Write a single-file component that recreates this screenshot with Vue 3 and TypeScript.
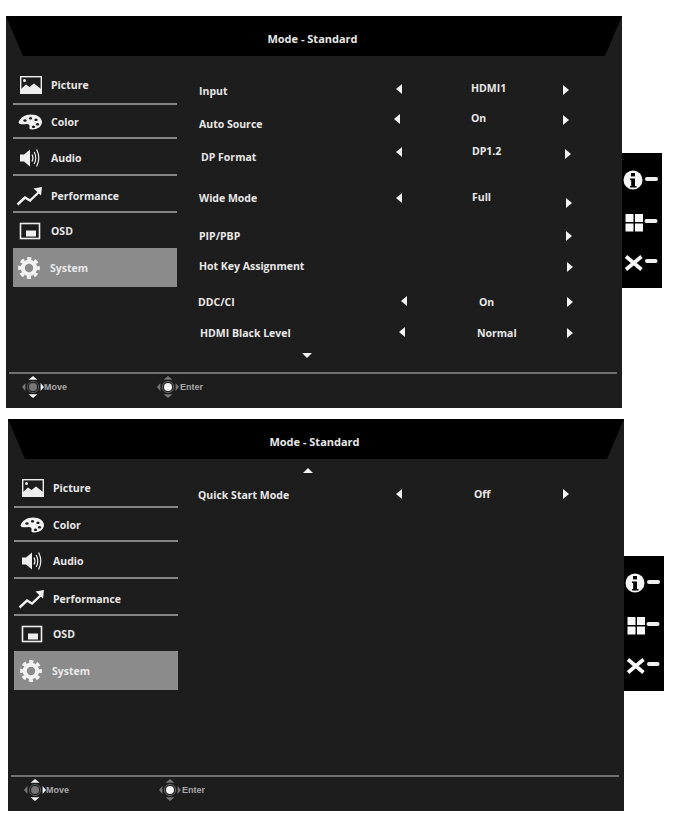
<script setup lang="ts">
type Offset = [number, number];

interface Row {
  label: string;
  value?: string;
  h: number;
  labelAt?: Offset;
  valueAt?: Offset;
  leftAt?: Offset;
  rightAt?: Offset;
}

interface Screen {
  rows: Row[];
  up: boolean;
  down: boolean;
}

const menu: { name: string; icon: string; h: number; at?: Offset }[] = [
  { name: "Picture", icon: "picture", h: 38 },
  { name: "Color", icon: "color", h: 34, at: [0, 1] },
  { name: "Audio", icon: "audio", h: 37, at: [0, 1] },
  { name: "Performance", icon: "performance", h: 37, at: [0, 2] },
  { name: "OSD", icon: "osd", h: 35 },
  { name: "System", icon: "system", h: 39, at: [-1, 0] },
];

const screens: Screen[] = [
  {
    up: false,
    down: true,
    rows: [
      { label: "Input", value: "HDMI1", h: 33, valueAt: [0, -3], leftAt: [0, -2], rightAt: [0, -1] },
      { label: "Auto Source", value: "On", h: 34, valueAt: [0, -6], leftAt: [-2, -5], rightAt: [0, -4] },
      { label: "DP Format", value: "DP1.2", h: 32, labelAt: [2, 0], valueAt: [1, -6], leftAt: [0, -5], rightAt: [2, -3] },
      { label: "Wide Mode", value: "Full", h: 50, valueAt: [1, -1], leftAt: [0, 0], rightAt: [3, 5] },
      { label: "PIP/PBP", h: 26, rightAt: [3, 0] },
      { label: "Hot Key Assignment", h: 34, rightAt: [4, 1] },
      { label: "DDC/CI", value: "On", h: 38, labelAt: [-1, 0], valueAt: [8, 0], leftAt: [5, -1], rightAt: [4, 0] },
      { label: "HDMI Black Level", value: "Normal", h: 24, labelAt: [1, 0], valueAt: [6, 0], leftAt: [3, -1], rightAt: [4, 0] },
    ],
  },
  {
    up: true,
    down: false,
    rows: [
      { label: "Quick Start Mode", value: "Off", h: 38, labelAt: [-2, -1], valueAt: [2, -2], leftAt: [-1, -2], rightAt: [-1, -2] },
    ],
  },
];

function shift(at?: Offset) {
  if (!at) return undefined;
  return { transform: `translate(${at[0]}px, ${at[1]}px)` };
}
</script>

<template>
  <div class="page">
    <section v-for="(screen, s) in screens" :key="s" class="screen">
      <div class="panel">
        <header class="title">Mode - Standard</header>

        <div class="body">
          <ul class="menu">
            <li
              v-for="item in menu"
              :key="item.name"
              class="menu-item"
              :class="{ active: item.name === 'System' }"
              :style="{ height: item.h + 'px' }"
            >
              <div class="menu-inner" :style="shift(item.at)">
                <svg class="menu-icon" viewBox="0 0 30 24" width="30" height="24" aria-hidden="true">
                  <g v-if="item.icon === 'picture'">
                    <rect x="5.7" y="3.7" width="20.6" height="16.6" fill="none" stroke="#eee" stroke-width="1.4" />
                    <circle cx="9.5" cy="7.5" r="1.5" fill="#eee" />
                    <path d="M6 20 L6 16 L11 11.5 L14.5 14 L19 10.5 L26 16 L26 20 Z" fill="#eee" />
                  </g>
                  <g v-else-if="item.icon === 'color'">
                    <path
                      fill="#f2f2f2"
                      fill-rule="evenodd"
                      d="M3.5 12.5 C5 7.5 10 4.5 16 4.5 C22.5 4.5 27 8 27 12 C27 16.5 22.5 19.5 17 19.5 C14.5 19.5 14 18.5 14.5 17 C15 15 13.5 13.8 11.5 14 C8.5 14.3 4.5 15 3.5 12.5 Z M10 9.2 a1.7 1.3 0 1 0 0.01 0 Z M15.5 7 a1.7 1.3 0 1 0 0.01 0 Z M21 8.5 a1.7 1.3 0 1 0 0.01 0 Z M22.5 13 a1.7 1.3 0 1 0 0.01 0 Z M18.5 15.5 a1.7 1.3 0 1 0 0.01 0 Z"
                    />
                  </g>
                  <g v-else-if="item.icon === 'audio'">
                    <path d="M5 8.5 H9 L15 3.5 V20.5 L9 15.5 H5 Z" fill="#eee" />
                    <path d="M17 8.5 Q19 12 17 15.5 M19.2 6 Q22.4 12 19.2 18 M21.6 3.5 Q26 12 21.6 20.5" fill="none" stroke="#eee" stroke-width="1.2" />
                  </g>
                  <g v-else-if="item.icon === 'performance'">
                    <path d="M2.5 20.5 L10 13.5 L15 16.5 L23.5 8.5" fill="none" stroke="#f2f2f2" stroke-width="2.4" />
                    <path d="M18.5 4.5 L27 3 L26 11.5 Z" fill="#f2f2f2" />
                  </g>
                  <g v-else-if="item.icon === 'osd'">
                    <rect x="5.5" y="4.5" width="19" height="15" fill="none" stroke="#eee" stroke-width="1.6" />
                    <rect x="11" y="11.5" width="10" height="6" fill="#eee" />
                  </g>
                  <g v-else>
                    <circle cx="15" cy="12" r="6.2" fill="none" stroke="#f2f2f2" stroke-width="4" />
                    <circle cx="15" cy="12" r="9.4" fill="none" stroke="#f2f2f2" stroke-width="3" stroke-dasharray="4.2 3.18" stroke-dashoffset="2.1" />
                  </g>
                </svg>
                <span>{{ item.name }}</span>
              </div>
            </li>
          </ul>

          <div class="options">
            <div class="nav nav-top">
              <span v-if="screen.up" class="tri-up"></span>
            </div>
            <div v-for="row in screen.rows" :key="row.label" class="row" :style="{ height: row.h + 'px' }">
              <span class="label" :style="shift(row.labelAt)">{{ row.label }}</span>
              <span class="cell">
                <i v-if="row.leftAt" class="tri-left" :style="shift(row.leftAt)"></i>
              </span>
              <span class="value" :style="shift(row.valueAt)">{{ row.value }}</span>
              <span class="cell">
                <i v-if="row.rightAt" class="tri-right" :style="shift(row.rightAt)"></i>
              </span>
            </div>
            <div v-if="screen.down" class="nav">
              <span class="tri-down"></span>
            </div>
          </div>
        </div>

        <footer class="foot">
          <div class="hint hint-move">
            <svg viewBox="0 0 22 22" width="22" height="22" aria-hidden="true">
              <circle cx="11" cy="11" r="5.6" fill="none" stroke="#555" stroke-width="1" />
              <circle cx="11" cy="11" r="4" fill="#777" />
              <path d="M6.5 3.8 H15.5 L11 0 Z M6.5 18.2 H15.5 L11 22 Z M18.6 7 V15 L22 11 Z" fill="#f2f2f2" />
              <path d="M3.4 7 V15 L0 11 Z" fill="#777" />
            </svg>
            <span>Move</span>
          </div>
          <div class="hint hint-enter">
            <svg viewBox="0 0 22 22" width="22" height="22" aria-hidden="true">
              <circle cx="11" cy="11" r="5.6" fill="none" stroke="#666" stroke-width="1" />
              <circle cx="11" cy="11" r="4" fill="#f5f5f5" />
              <path d="M6.5 3.8 H15.5 L11 0 Z M6.5 18.2 H15.5 L11 22 Z M18.6 7 V15 L22 11 Z M3.4 7 V15 L0 11 Z" fill="#777" />
            </svg>
            <span>Enter</span>
          </div>
        </footer>
      </div>

      <aside class="keys">
        <svg viewBox="0 0 40 135" width="40" height="135" aria-hidden="true">
          <circle cx="11" cy="27" r="9.5" fill="#f5f5f5" />
          <rect x="9" y="20" width="4" height="3.4" fill="#000" />
          <path d="M8 25.5 H13 V33 H14.5 V34.5 H8 V33 H9.2 V27 H8 Z" fill="#000" />
          <rect x="23" y="24" width="13" height="4" rx="2" fill="#f0f0f0" />

          <path d="M3.5 61 H11.5 V69 H3.5 Z M13 61 H21 V69 H13 Z M3.5 70.5 H11.5 V78.5 H3.5 Z M13 70.5 H21 V78.5 H13 Z" fill="#fafafa" />
          <rect x="22.5" y="66" width="13" height="4" rx="2" fill="#f0f0f0" />

          <path d="M4 103.5 L19.5 116.5 M19.5 103.5 L4 116.5" stroke="#fafafa" stroke-width="3.6" />
          <rect x="23" y="106" width="12.5" height="4" rx="2" fill="#f0f0f0" />
        </svg>
      </aside>
    </section>
  </div>
</template>

<style scoped>
.page {
  width: 677px;
  height: 827px;
  padding-top: 16px;
  box-sizing: border-box;
  font-family: "Open Sans", "Liberation Sans", sans-serif;
}

.screen {
  display: flex;
  align-items: flex-start;
  margin-left: 6px;
}

.screen + .screen {
  margin-top: 11px;
  margin-left: 8px;
}

.panel {
  width: 616px;
  height: 392px;
  display: flex;
  flex-direction: column;
  background: #1e1d1d;
  color: #e8e8e8;
  font-size: 10.5px;
  font-weight: 700;
}

.title {
  height: 40px;
  flex: none;
  padding: 5px 3px 0 0;
  box-sizing: border-box;
  display: flex;
  align-items: center;
  justify-content: center;
  background: #000;
  clip-path: polygon(0 0, 100% 0, 599px 100%, 17px 100%);
  font-size: 11px;
}

.body {
  flex: 1;
  display: flex;
  min-height: 0;
}

.menu {
  list-style: none;
  width: 164px;
  flex: none;
  margin: 11px 0 0 7px;
  padding: 0;
}

.screen + .screen .menu {
  margin-left: 6px;
}

.screen + .screen .menu-item {
  padding-left: 3px;
}

.menu-item {
  display: flex;
  align-items: center;
  padding-left: 2px;
  box-sizing: border-box;
  border-bottom: 2px solid #858585;
}

.menu-item:nth-child(5) {
  border-bottom: 0;
}

.menu-item.active {
  border-bottom: 0;
  background: #8b8b8b;
}

.menu-inner {
  display: flex;
  align-items: center;
  gap: 6px;
}

.menu-icon {
  flex: none;
}

.options {
  margin-left: 22px;
  flex: 1;
}

.nav {
  height: 20px;
  display: flex;
  justify-content: center;
  align-items: center;
  width: 216px;
}

.nav-top {
  height: 18px;
  padding-top: 4px;
  box-sizing: border-box;
}

.row {
  display: grid;
  grid-template-columns: 191px 18px 149px 18px;
  align-items: center;
}

.value {
  padding-left: 63px;
}

.cell {
  display: flex;
  justify-content: center;
}

.tri-left,
.tri-right {
  width: 0;
  height: 0;
  border-top: 5.5px solid transparent;
  border-bottom: 5.5px solid transparent;
}

.tri-left {
  border-right: 6px solid #f2f2f2;
}

.tri-right {
  border-left: 6px solid #f2f2f2;
}

.tri-up,
.tri-down {
  width: 0;
  height: 0;
  border-left: 5.5px solid transparent;
  border-right: 5.5px solid transparent;
}

.tri-up {
  border-bottom: 5px solid #f2f2f2;
}

.tri-down {
  border-top: 5px solid #f2f2f2;
}

.foot {
  height: 36px;
  flex: none;
  margin: 0 5px 0 3px;
  padding-bottom: 8px;
  box-sizing: border-box;
  border-top: 2px solid #6f6f6f;
  display: flex;
  align-items: center;
  font-family: "Liberation Sans", Arial, sans-serif;
  font-size: 9px;
  color: #a8a8a8;
}

.hint {
  display: flex;
  align-items: center;
}

.hint-move {
  margin-left: 13px;
  width: 135px;
}

.hint-enter {
  gap: 1px;
}

.keys {
  width: 40px;
  height: 135px;
  flex: none;
  margin-top: 137px;
  background: #000;
}

.keys svg {
  display: block;
}
</style>

<style>
html,
body {
  background: #fff;
}
</style>
